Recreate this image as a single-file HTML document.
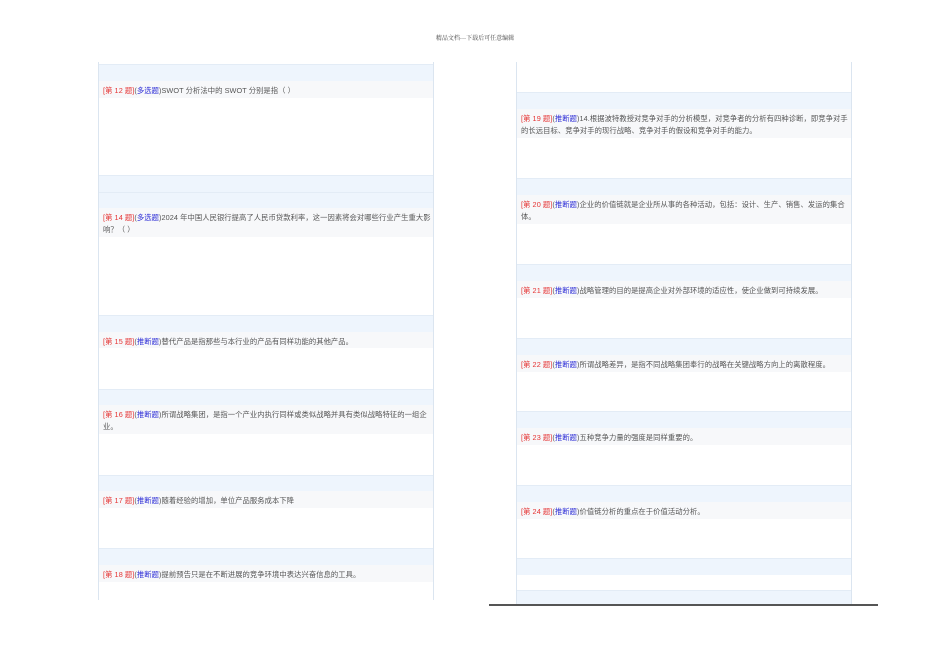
<!DOCTYPE html>
<html><head><meta charset="utf-8"><style>
*{margin:0;padding:0;box-sizing:border-box}
body{width:950px;height:672px;background:#fff;position:relative;overflow:hidden;font-family:"Liberation Sans","Noto Sans CJK SC",sans-serif}
.hd{position:absolute;top:33px;left:0;width:950px;text-align:center;font-size:6px;color:#444;font-family:"Noto Serif CJK SC",serif}
.panel{position:absolute;border-left:1px solid #dbe5f0;border-right:1px solid #dbe5f0;background:#fff}
.b{position:absolute;left:0;right:0;background:#eef5fd;border-top:1px solid #e3ecf6}
.q{position:absolute;left:0;right:0;background:#f7f8fa;font-size:7.3px;letter-spacing:0.07px;line-height:12px;color:#555;padding:4px 4px 0 4px;white-space:nowrap;overflow:hidden}
.r{color:#e53333}.u{color:#2b2bd6}
.line{position:absolute;left:489px;top:604px;width:389px;height:2px;background:#555}
</style></head><body>
<div class="hd">精品文档---下载后可任意编辑</div>

<div class="panel" style="left:98px;top:62px;width:336px;height:538px">
 <div class="b" style="top:2px;height:17px"></div>
 <div class="q" style="top:19px;height:17px"><span class="r">[第 12 题]</span>(<span class="u">多选题</span>)SWOT 分析法中的 SWOT 分别是指（ ）</div>
 <div class="b" style="top:113px;height:17px"></div>
 <div class="b" style="top:130px;height:16px"></div>
 <div class="q" style="top:146px;height:29px"><span class="r">[第 14 题]</span>(<span class="u">多选题</span>)2024 年中国人民银行提高了人民币贷款利率，这一因素将会对哪些行业产生重大影<br>响？（ ）</div>
 <div class="b" style="top:253px;height:17px"></div>
 <div class="q" style="top:270px;height:16px"><span class="r">[第 15 题]</span>(<span class="u">推断题</span>)替代产品是指那些与本行业的产品有同样功能的其他产品。</div>
 <div class="b" style="top:327px;height:16px"></div>
 <div class="q" style="top:343px;height:29px"><span class="r">[第 16 题]</span>(<span class="u">推断题</span>)所谓战略集团，是指一个产业内执行同样或类似战略并具有类似战略特征的一组企<br>业。</div>
 <div class="b" style="top:413px;height:16px"></div>
 <div class="q" style="top:429px;height:17px"><span class="r">[第 17 题]</span>(<span class="u">推断题</span>)随着经验的增加，单位产品服务成本下降</div>
 <div class="b" style="top:486px;height:17px"></div>
 <div class="q" style="top:503px;height:17px"><span class="r">[第 18 题]</span>(<span class="u">推断题</span>)提前预告只是在不断进展的竞争环境中表达兴奋信息的工具。</div>
</div>

<div class="panel" style="left:516px;top:62px;width:336px;height:543px">
 <div class="b" style="top:30px;height:17px"></div>
 <div class="q" style="top:47px;height:29px"><span class="r">[第 19 题]</span>(<span class="u">推断题</span>)14.根据波特教授对竞争对手的分析模型，对竞争者的分析有四种诊断，即竞争对手<br>的长远目标、竞争对手的现行战略、竞争对手的假设和竞争对手的能力。</div>
 <div class="b" style="top:116px;height:17px"></div>
 <div class="q" style="top:133px;height:29px"><span class="r">[第 20 题]</span>(<span class="u">推断题</span>)企业的价值链就是企业所从事的各种活动，包括：设计、生产、销售、发运的集合<br>体。</div>
 <div class="b" style="top:202px;height:17px"></div>
 <div class="q" style="top:219px;height:17px"><span class="r">[第 21 题]</span>(<span class="u">推断题</span>)战略管理的目的是提高企业对外部环境的适应性，使企业做到可持续发展。</div>
 <div class="b" style="top:276px;height:17px"></div>
 <div class="q" style="top:293px;height:17px"><span class="r">[第 22 题]</span>(<span class="u">推断题</span>)所谓战略差异，是指不同战略集团奉行的战略在关键战略方向上的离散程度。</div>
 <div class="b" style="top:349px;height:17px"></div>
 <div class="q" style="top:366px;height:17px"><span class="r">[第 23 题]</span>(<span class="u">推断题</span>)五种竞争力量的强度是同样重要的。</div>
 <div class="b" style="top:423px;height:17px"></div>
 <div class="q" style="top:440px;height:17px"><span class="r">[第 24 题]</span>(<span class="u">推断题</span>)价值链分析的重点在于价值活动分析。</div>
 <div class="b" style="top:496px;height:17px"></div>
 <div class="b" style="top:528px;height:15px"></div>
</div>
<div class="line"></div>
</body></html>
